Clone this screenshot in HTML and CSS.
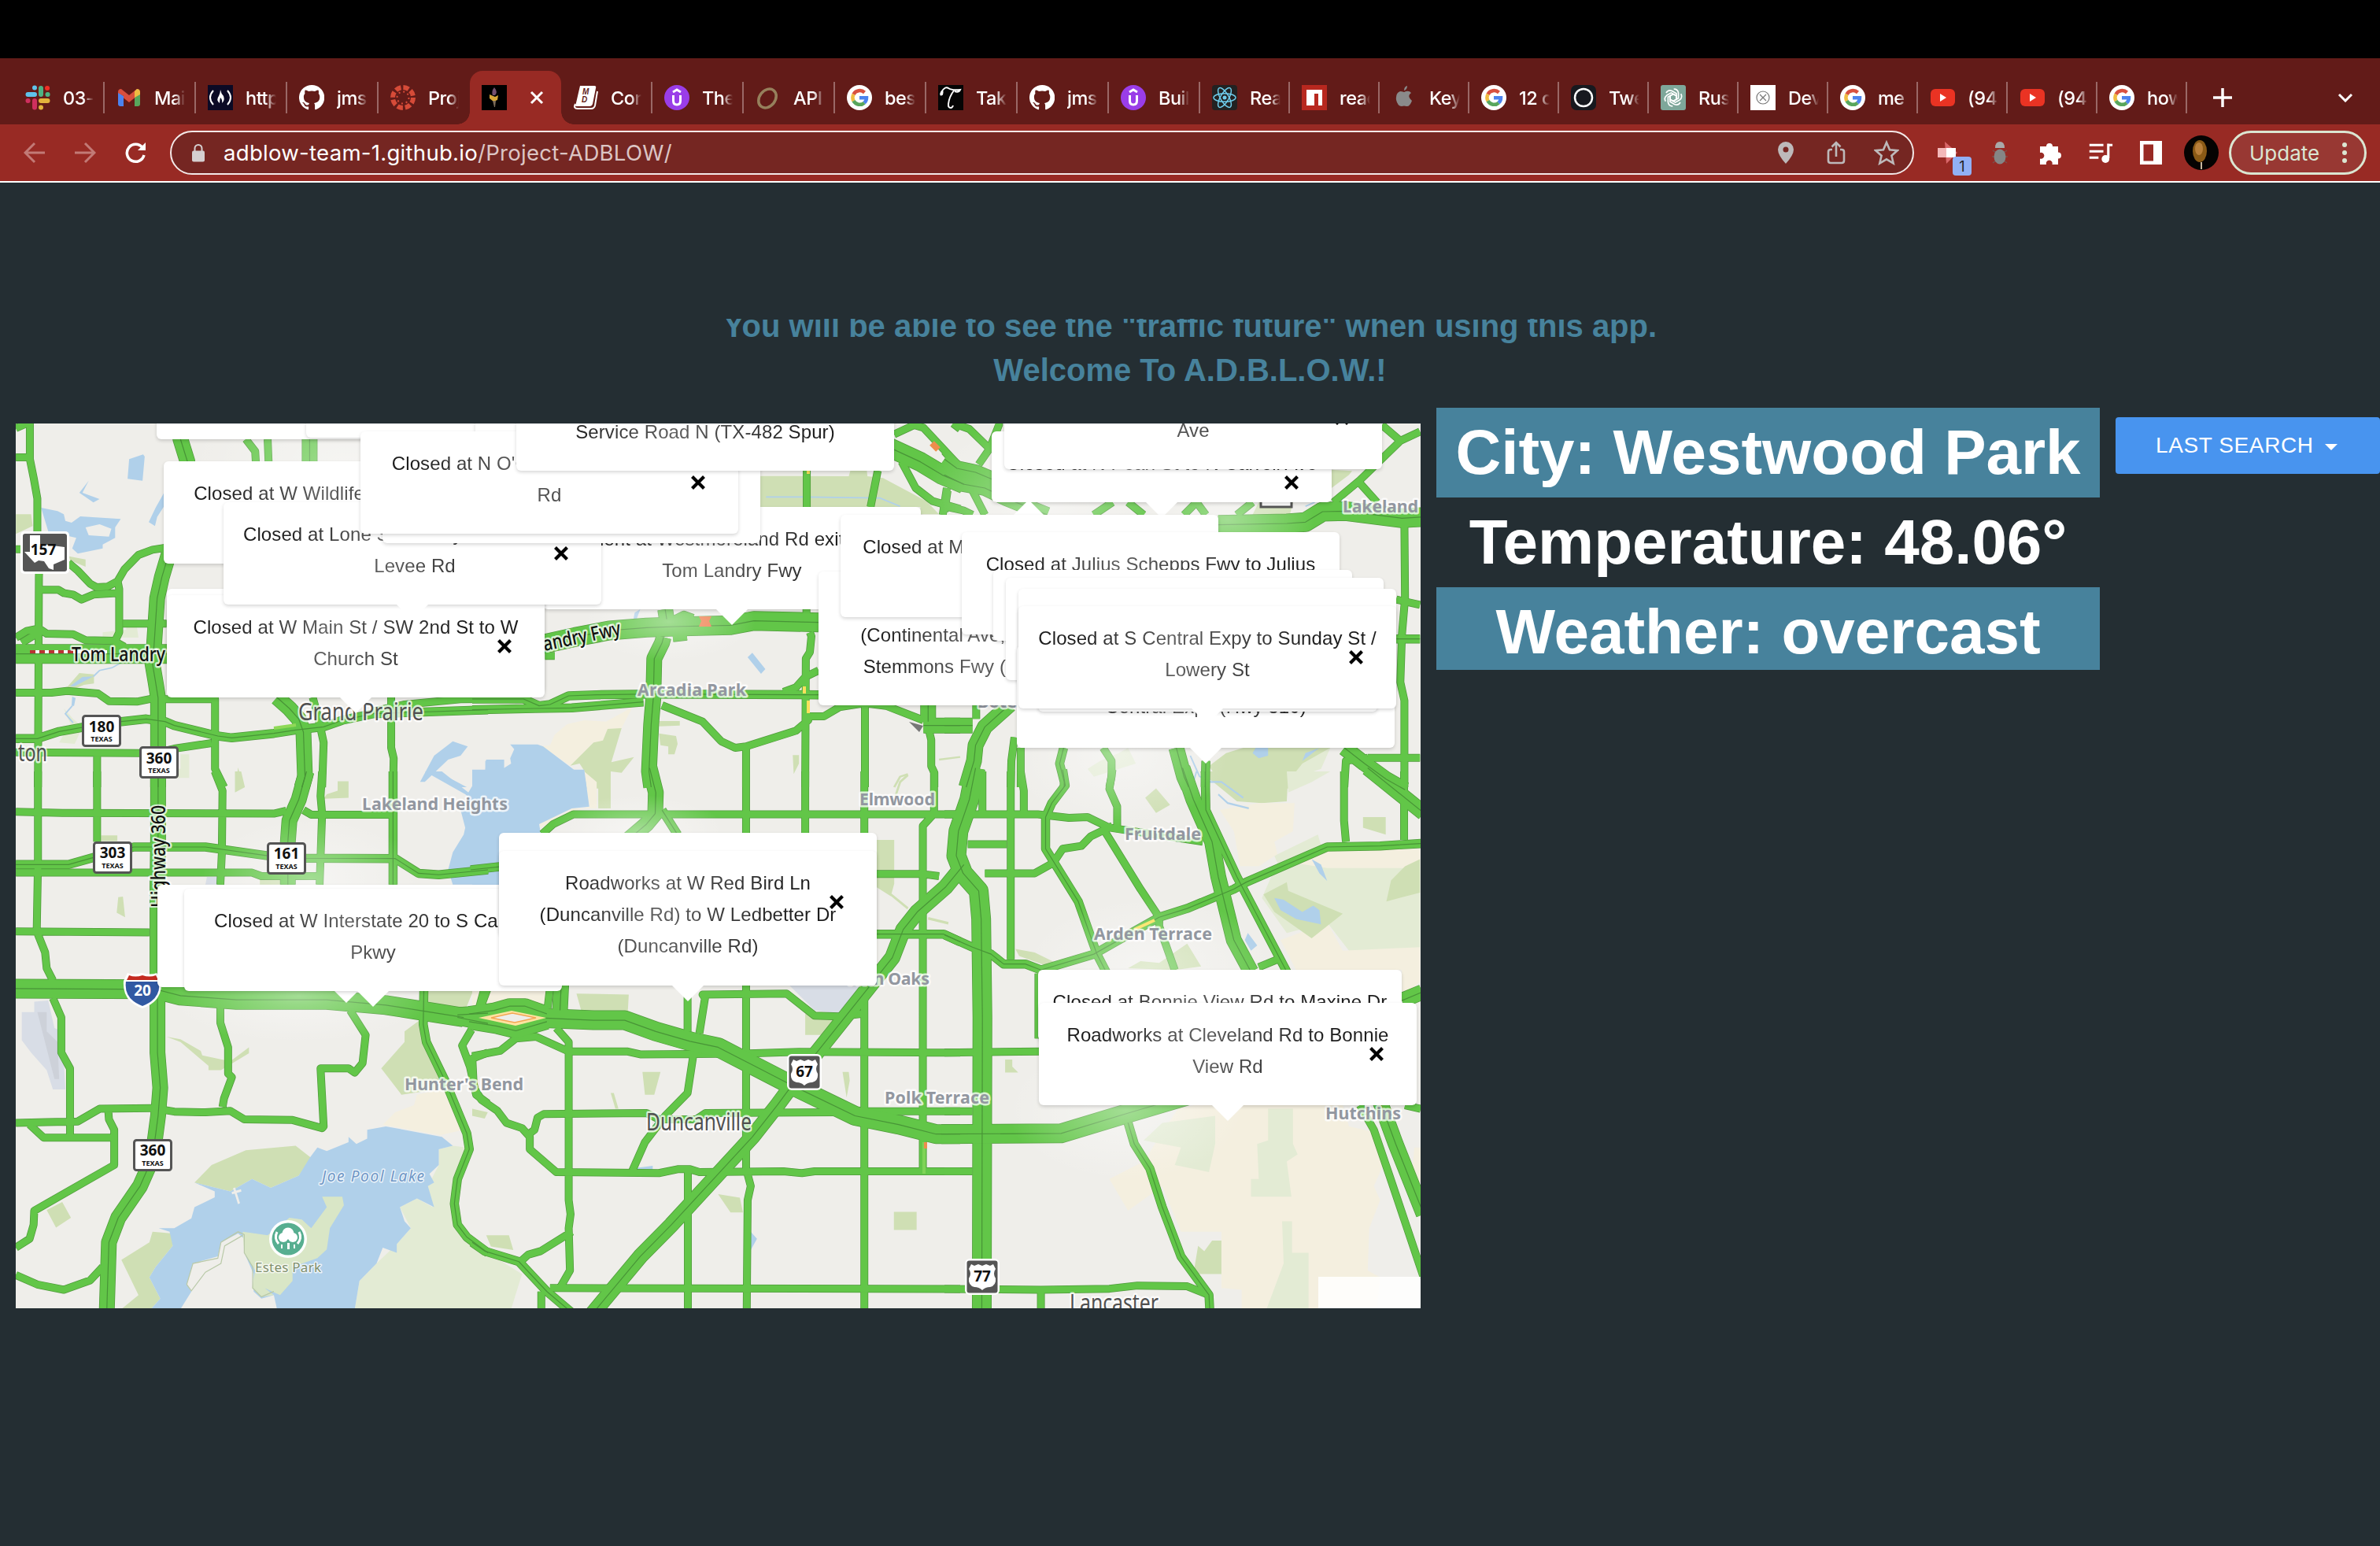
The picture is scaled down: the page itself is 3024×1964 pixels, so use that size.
FILE: index.html
```html
<!DOCTYPE html>
<html lang="en">
<head>
<meta charset="utf-8">
<title>A.D.B.L.O.W.</title>
<link rel="stylesheet" href="styles.css">
</head>
<body>
<svg class="defs" width="0" height="0" aria-hidden="true">
  <symbol id="i-slack" viewBox="0 0 32 32"><g stroke-width="6" stroke-linecap="round"><path d="M12 3.500v.1M3.500 12h8.500" stroke="#5fc3ea"/><path d="M20 4v8" stroke="#4eb283"/><path d="M28.500 12h.1" stroke="#4eb283"/><path d="M28 4h.1" stroke="#f02f25"/><path d="M20 28.500v.1M20 20h8.500" stroke="#e3b23c"/><path d="M12 20v8.500M3.500 20h.1" stroke="#cf2f5e"/></g></symbol>
  <symbol id="i-gmail" viewBox="0 0 32 32"><path d="M2 9v15q0 3 3 3h4V14z" fill="#4c83ee"/><path d="M30 9v15q0 3-3 3h-4V14z" fill="#58a65c"/><path d="M2 9q0-4 4-4l10 8 10-8v9l-10 8L9 16.500V27 14l-7-4z" fill="#d94f3d"/><path d="M23 8l3-3q4 0 4 4v3l-7 4z" fill="#f0bc42"/></symbol>
  <symbol id="i-fcc" viewBox="0 0 32 32"><path d="M0 0h32v32H0z" fill="#0b0a25"/><g fill="none" stroke="#fff" stroke-width="2"><path d="M7 7q-8 9 0 18M25 7q8 9 0 18"/></g><path d="M16 6q1 5 4 8 2 6-2 9 1-4-2-7-1 3-1 7-5-4-1-9 2-4 2-8z" fill="#fff"/></symbol>
  <symbol id="i-github" viewBox="0 0 32 32"><path d="M16 0a16 16 0 0 0-5 31.200c.8.1 1.100-.4 1.100-.8v-3c-4.500 1-5.400-2-5.400-2-.7-1.900-1.800-2.400-1.800-2.400-1.500-1 .1-1 .1-1 1.600.1 2.500 1.700 2.500 1.700 1.400 2.500 3.800 1.800 4.700 1.400.1-1 .6-1.800 1-2.200-3.600-.4-7.300-1.800-7.300-7.900 0-1.800.6-3.200 1.600-4.300-.1-.4-.7-2 .2-4.200 0 0 1.300-.4 4.400 1.600a15 15 0 0 1 8 0c3-2 4.400-1.600 4.400-1.600.9 2.200.3 3.800.2 4.200 1 1.100 1.600 2.500 1.600 4.300 0 6.100-3.700 7.500-7.300 7.900.6.500 1.100 1.500 1.100 3v4.500c0 .4.300.9 1.100.8A16 16 0 0 0 16 0z" fill="#fff"/></symbol>
  <symbol id="i-canvas" viewBox="0 0 32 32"><circle cx="16" cy="16" r="13" fill="none" stroke="#d64b38" stroke-width="6" stroke-dasharray="7.200 3.010"/><circle cx="16" cy="16" r="7.500" fill="none" stroke="#d64b38" stroke-width="2" stroke-dasharray="2 3.890"/></symbol>
  <symbol id="i-torch" viewBox="0 0 32 32"><path d="M0 0h32v32H0z" fill="#000"/><path d="M16 3q5 6 1 10h-3q-2-5 2-10z" fill="#76506f"/><path d="M10 12l7 3 4-2-1 6-5 2-5-4z" fill="#d8a637"/><path d="M14 20h4l-1 8h-1z" fill="#7c6b58"/></symbol>
  <symbol id="i-md" viewBox="0 0 32 32"><path d="M9 1h18q3 0 2 3l-4 20q-1 3-4 3H3z" fill="#fff"/><path d="M3 24q-3 6 3 6h17q4 0 5-4l3-18" fill="none" stroke="#fff" stroke-width="2"/><text x="12" y="12" class="md">M</text><text x="11" y="22" class="md">D</text></symbol>
  <symbol id="i-udemy" viewBox="0 0 32 32"><circle cx="16" cy="16" r="16" fill="#9a3de8"/><path d="M11 9l5-3 5 3M11.500 13v7q0 5 4.500 5t4.500-5v-7" fill="none" stroke="#fff" stroke-width="3"/></symbol>
  <symbol id="i-api" viewBox="0 0 32 32"><ellipse cx="15" cy="17" rx="10" ry="13" transform="rotate(38 15 17)" fill="none" stroke="#96805c" stroke-width="3.500"/></symbol>
  <symbol id="i-google" viewBox="0 0 32 32"><circle cx="16" cy="16" r="16" fill="#fff"/><g fill="none" stroke-width="4.500"><path d="M8.500 11.800A9 9 0 0 1 22.500 9.500" stroke="#d9513f"/><path d="M8.500 20.200a9 9 0 0 1 0-8.400" stroke="#f0bc42"/><path d="M8.500 20.200a9 9 0 0 0 13.700 2.500" stroke="#58a65c"/><path d="M16 16.200h9a9 9 0 0 1-2.900 6.500" stroke="#4c83ee"/></g></symbol>
  <symbol id="i-script" viewBox="0 0 32 32"><path d="M0 0h32v32H0z" fill="#050505"/><path d="M3 11q4-6 2 1-3 2-1-3Q9 1 13 4t15 2q-2 4-7 2M20 7q-6 8-7 17-.5 5 3 5 2 0 3-3" fill="none" stroke="#fff" stroke-width="2"/></symbol>
  <symbol id="i-react" viewBox="0 0 32 32"><rect width="32" height="32" rx="4" fill="#222"/><g fill="none" stroke="#6fcdec" stroke-width="1.500"><ellipse cx="16" cy="16" rx="14" ry="5.300"/><ellipse cx="16" cy="16" rx="14" ry="5.300" transform="rotate(60 16 16)"/><ellipse cx="16" cy="16" rx="14" ry="5.300" transform="rotate(120 16 16)"/></g><circle cx="16" cy="16" r="2.500" fill="#6fcdec"/></symbol>
  <symbol id="i-npm" viewBox="0 0 32 32"><path d="M0 0h32v32H0z" fill="#b8281f"/><path d="M6 6h20v20h-5V11h-5v15H6z" fill="#fff"/></symbol>
  <symbol id="i-apple" viewBox="0 0 32 32"><path d="M16 9q6-3 9 1-6 4 1 10-3 8-7 7-3-1-6 0Q8 27 6 19q-1-9 5-11 2 0 5 1zM16 7q0-5 4-6 0 5-4 6z" fill="#8a8a8a"/></symbol>
  <symbol id="i-ring" viewBox="0 0 32 32"><rect width="32" height="32" rx="7" fill="#17191f"/><circle cx="16" cy="16" r="11" fill="none" stroke="#fff" stroke-width="2.500"/></symbol>
  <symbol id="i-openai" viewBox="0 0 32 32"><rect width="32" height="32" rx="3" fill="#7ea79a"/><g fill="none" stroke="#fff" stroke-width="1.700"><path id="petal" d="M16 11.500l-4 2.300v7.500l5.500 3.200q5 2 7.500-2.500"/><use href="#petal" transform="rotate(60 16 16)"/><use href="#petal" transform="rotate(120 16 16)"/><use href="#petal" transform="rotate(180 16 16)"/><use href="#petal" transform="rotate(240 16 16)"/><use href="#petal" transform="rotate(300 16 16)"/></g></symbol>
  <symbol id="i-dev" viewBox="0 0 32 32"><path d="M0 0h32v32H0z" fill="#fff"/><g fill="none" stroke="#777" stroke-width="1.200"><circle cx="16" cy="16" r="8"/><path d="M12 12l8 8M20 12l-8 8"/></g></symbol>
  <symbol id="i-youtube" viewBox="0 0 32 32"><rect x="1" y="5" width="31" height="22" rx="6" fill="#ea3323"/><path d="M13 11l8 5-8 5z" fill="#fff"/></symbol>
  <symbol id="i-x" viewBox="0 0 18 18"><path d="M3 3l12 12M15 3L3 15" stroke="currentColor" stroke-width="4.200" stroke-linecap="square"/></symbol>
  <symbol id="us" viewBox="0 0 46 48"><rect x="1" y="1" width="44" height="46" rx="6" fill="#fff"/><rect x="3.500" y="3.500" width="39" height="41" rx="3" fill="#555"/><path d="M9 8l4 2 5-2 5 2 5-2 5 2 4-2 3 6q-4 6 0 12 1 9-7 11-6 0-10 4-4-4-10-4-8-2-7-11 4-6 0-12z" fill="#fff"/></symbol>
</svg>

<header class="browser">
  <div class="notch"></div>
  <nav class="tabs">
    <div class="tab"><svg><use href="#i-slack"/></svg><span>03-w</span></div>
    <div class="tab"><svg><use href="#i-gmail"/></svg><span>Mail</span></div>
    <div class="tab"><svg><use href="#i-fcc"/></svg><span>https</span></div>
    <div class="tab"><svg><use href="#i-github"/></svg><span>jmsa</span></div>
    <div class="tab bare"><svg><use href="#i-canvas"/></svg><span>Proj</span></div>
    <div class="tab active"><svg><use href="#i-torch"/></svg><svg class="close" viewBox="0 0 20 20"><path d="M3 3l14 14M17 3L3 17"/></svg></div>
    <div class="tab"><svg><use href="#i-md"/></svg><span>Con</span></div>
    <div class="tab"><svg><use href="#i-udemy"/></svg><span>The</span></div>
    <div class="tab"><svg><use href="#i-api"/></svg><span>API</span></div>
    <div class="tab"><svg><use href="#i-google"/></svg><span>best</span></div>
    <div class="tab"><svg><use href="#i-script"/></svg><span>Take</span></div>
    <div class="tab"><svg><use href="#i-github"/></svg><span>jmsa</span></div>
    <div class="tab"><svg><use href="#i-udemy"/></svg><span>Buil</span></div>
    <div class="tab narrow"><svg><use href="#i-react"/></svg><span>Rea</span></div>
    <div class="tab narrow"><svg><use href="#i-npm"/></svg><span>reac</span></div>
    <div class="tab narrow"><svg><use href="#i-apple"/></svg><span>Key</span></div>
    <div class="tab narrow"><svg><use href="#i-google"/></svg><span>12 c</span></div>
    <div class="tab narrow"><svg><use href="#i-ring"/></svg><span>Twe</span></div>
    <div class="tab narrow"><svg><use href="#i-openai"/></svg><span>Rus</span></div>
    <div class="tab narrow"><svg><use href="#i-dev"/></svg><span>Dev</span></div>
    <div class="tab narrow"><svg><use href="#i-google"/></svg><span>me</span></div>
    <div class="tab narrow"><svg><use href="#i-youtube"/></svg><span>(94)</span></div>
    <div class="tab narrow"><svg><use href="#i-youtube"/></svg><span>(94)</span></div>
    <div class="tab narrow"><svg><use href="#i-google"/></svg><span>how</span></div>
    <svg class="plus" viewBox="0 0 24 24"><path d="M12 0v24M0 12h24"/></svg>
    <svg class="chev" viewBox="0 0 20 12"><path d="M2 2l8 8 8-8"/></svg>
  </nav>
  <div class="toolbar">
    <svg class="nav dim" viewBox="0 0 28 28"><path d="M27 14H3M14 2L2 14l12 12"/></svg>
    <svg class="nav dim" viewBox="0 0 28 28"><path d="M1 14h24M14 2l12 12-12 12"/></svg>
    <svg class="nav reload" viewBox="0 0 28 28"><path d="M23 7.500A11 11 0 1 0 25 17"/><path d="M27 1v10H17z" fill="#fff" stroke="none"/></svg>
    <div class="omnibox">
      <svg class="lock" viewBox="0 0 18 24"><rect x="1" y="9" width="16" height="14" rx="2" fill="#d5cfd0"/><path d="M4.500 10V6a4.500 4.500 0 0 1 9 0v4" fill="none" stroke="#d5cfd0" stroke-width="2"/></svg>
      <p class="url">adblow-team-1.github.io<span>/Project-ADBLOW/</span></p>
      <div class="omni-icons">
        <svg viewBox="0 0 32 32"><path d="M16 2a10 10 0 0 0-10 10q0 7 10 18 10-11 10-18A10 10 0 0 0 16 2zm0 6.500a3.500 3.500 0 1 1 0 7 3.500 3.500 0 0 1 0-7z" fill="#bdb9ba"/></svg>
        <svg viewBox="0 0 32 32"><path d="M11 12H9q-3 0-3 3v11q0 3 3 3h14q3 0 3-3V15q0-3-3-3h-2M16 21V3M10.500 8.500L16 3l5.500 5.500" class="line"/></svg>
        <svg viewBox="0 0 32 32"><path d="M16 3l4 9.200 10 .9-7.600 6.600 2.300 9.800L16 24.300l-8.700 5.200 2.300-9.800L2 13.100l10-.9z" class="line"/></svg>
      </div>
    </div>
    <div class="exts">
      <div class="ext"><svg viewBox="0 0 32 32"><path d="M10 2l16 14-14 14z" fill="#d9676a"/><path d="M1 10h14v12H1z" fill="#f3b8b9"/><path d="M12 10h12v12H12z" fill="#fff"/></svg><b class="badge">1</b></div>
      <svg viewBox="0 0 32 32"><g stroke="#7d4f4a" stroke-width="1.500"><path d="M7 13l4 3M25 13l-4 3M6 21h4M26 21h-4M7 29l4-3M25 29l-4-3"/></g><ellipse cx="16" cy="21" rx="7.500" ry="9.500" fill="#858585"/><path d="M10 10q0-8 6-8t6 8z" fill="#a9a9a9"/></svg>
      <svg viewBox="0 0 32 32"><path d="M3 8h8a4 4 0 1 1 8 0h7v7.500a4 4 0 1 1 0 8V31h-7.500a4 4 0 1 0-7.500 0H3v-7.500a4 4 0 1 0 0-7.500z" fill="#fff"/></svg>
      <svg viewBox="0 0 36 32"><path d="M2 5h20M2 14h20M2 23h13" stroke="#fff" stroke-width="3.500"/><path d="M29 3v21M28 5h7" stroke="#fff" stroke-width="3.500"/><circle cx="25" cy="25" r="5.500" fill="#fff"/></svg>
      <svg viewBox="0 0 32 32"><path d="M2 1h28v30H2zM6.500 5.500v21H19v-21z" fill="#fff" fill-rule="evenodd"/></svg>
    </div>
    <svg class="avatar" viewBox="0 0 44 44"><circle cx="22" cy="22" r="22" fill="#050302"/><ellipse cx="20" cy="20" rx="9" ry="14" fill="#8a5a16"/><ellipse cx="19" cy="17" rx="5" ry="8" fill="#b87f3a"/><path d="M22 34v9" stroke="#c9b9a0" stroke-width="2"/></svg>
    <button class="update"><span>Update</span><svg viewBox="0 0 8 28"><circle cx="4" cy="4" r="3"/><circle cx="4" cy="14" r="3"/><circle cx="4" cy="24" r="3"/></svg></button>
  </div>
</header>

<section class="intro">
  <div class="intro-lines">
    <h3>You will be able to see the "traffic future" when using this app.</h3>
    <h3>Welcome To A.D.B.L.O.W.!</h3>
  </div>
</section>

<main class="content">
  <div class="map">
    <svg class="canvas" viewBox="20 538 1785 1124">
      <defs>
        <radialGradient id="glow"><stop offset="0" stop-color="#fff" stop-opacity=".42"/><stop offset="1" stop-color="#fff" stop-opacity="0"/></radialGradient>
        <g id="roads">
          <g transform="translate(0 520) scale(.39541 .33333)">
            <path class="st" d="M96 54V190L108 260 120 340V470L127 560 125 640 124 900 122 1440M51 183H96M51 533H70M220 585L250 615 290 665 310 678 345 676 378 655 400 610 445 555 490 535 530 528M378 655L383 685V850L365 895M125 688H188L205 700 235 706 262 725 300 706 383 700M395 817H535M51 870L85 845 125 835 150 855 235 857 275 880 365 882 400 905M70 890L125 850M51 1080H165L215 1073 315 1083 350 1112 440 1114 500 1100M530 1105H691V1370L720 1440M51 1307L450 1310 500 1310 560 1293 680 1272M312 1310V1440M1005 1098L1015 1140 1030 1215 1040 1270 1035 1440M1257 1098V1290L1265 1330 1263 1440M790 114L820 160 822 200M860 114L863 200M51 72L85 54M1200 1150L1300 1125 1480 1105 1568 1104"/>
            <path class="dv" d="M51 1255H120L190 1228 265 1212 390 1190 470 1180 530 1190 560 1205 700 1245 745 1252 880 1235 950 1222 1040 1210 1100 1185 1200 1160 1568 1145"/>
            <path class="hw" d="M575 54L580 114 602 198 590 400 545 540 520 640 505 720 495 900 490 970 500 1040 508 1100V1440M995 100V210M890 1098L930 1140 960 1180 975 1230 980 1400 970 1440"/>
            <path class="fw" d="M51 932H540"/>
          </g>
          <g transform="translate(600 520) scale(.39541 .33333)">
            <path class="st" d="M234 940H265M650 800L680 782 710 795M645 872L690 866M610 1128L740 1190 800 1265 845 1290 880 1285 1040 1225 1080 1185V1170H1130L1180 1135 1260 1120 1330 1130 1450 1185M1074 762V800M1085 850L1090 865 1085 925 1072 950 1070 1440M1000 1077L1040 1060 1070 1020 1113 995M880 1285V1440M1262 1128V1440M1465 1210L1475 1260V1360L1485 1385V1440M1075 234V372M1303 234L1280 372M1356 95L1420 60 1450 70 1568 220M1380 200L1425 300 1480 350 1568 380M1525 300L1512 402M1545 54L1568 75"/>
            <path class="dv" d="M0 1104H165L215 1130 250 1125 310 1092 400 1088 580 1085 1113 1088M0 1145L200 1140 320 1138 550 1115"/>
            <path class="hw" d="M620 762L625 800M615 868L610 890 585 950 582 1100 575 1200 568 1380 575 1440M1465 1128V1190M1450 1205H1568"/>
            <path class="fw" d="M200 900L235 893 330 868 440 843 560 832 650 828 830 823 905 806 1113 812M1340 145L1440 200 1510 250 1580 285"/>
          </g>
          <g transform="translate(1200 520) scale(.39541 .33333)">
            <path class="st" d="M30 54L80 75 145 150 110 210M165 54L175 60 145 150M0 160L45 220M10 310L0 390M0 370L60 385 90 402M90 310L130 402M480 402L540 354M590 354L640 402M770 402L810 354 840 402M940 402L990 354M1406 60L1465 120 1528 85M1465 120L1335 270 1250 354M1330 275L1390 354M1478 435L1480 720 1470 860 1465 1040 1478 1110V1440M1452 725L1528 745M1360 1328H1528M1360 1328L1290 1340 1285 1440M102 1128V1180M225 1250L215 1340 213 1440M245 1290V1440M510 1290L537 1340V1400L530 1440"/>
            <path class="dv" d="M1452 875H1528M383 1290L370 1350 385 1420V1440M840 1340L838 1440"/>
            <path class="hw" d="M0 190L40 225 100 240 160 270M0 250L60 285 130 300 200 340 330 402M0 1205H90M210 1125L130 1210 100 1280 95 1340 70 1440M745 1290L770 1400 785 1440M1285 1290L1350 1350 1420 1410 1480 1450"/>
            <path class="fw" d="M880 440L1100 435 1160 430 1215 390 1290 388 1470 415 1540 410"/>
          </g>
          <g transform="translate(0 980) scale(.39541 .44643)">
            <path class="st" d="M122 0V260L118 455 145 515 150 560 170 595M170 645L197 700V800L225 845V1040M312 0V200M51 115L200 118 880 120 920 112M51 288H810L840 298H1030M690 0L715 55 713 230 708 322M1035 0L1030 70 1035 120 1027 322M975 110L1000 123H1263M51 455L480 458M708 660V715L733 785V860L745 870 720 930 715 955M51 1000L150 998 250 996 320 960 490 958 560 968 660 970 740 966 785 990 940 992 1035 1015 1040 1010 1030 845H1120L1140 857 1165 830 1175 750 1125 680M95 1005L140 1042H365M348 965L350 990 367 1020V1120L110 1250 108 1290 95 1330 51 1355M51 1433L120 1460 205 1475 290 1448 330 1410M1568 615L1545 670M1515 735L1485 780 1510 840 1530 920 1568 945M1510 820L1568 800"/>
            <path class="dv" d="M51 265H220L300 245 430 215H660L860 240 980 247 1270 248 1345 290 1410 294 1568 280M1263 0V322M1362 622L1360 720 1370 770 1430 880 1500 1030 1508 1075 1470 1160 1460 1230 1470 1290 1500 1325 1568 1370"/>
            <path class="hw" d="M985 0L960 80 930 140 925 200V322M508 -10V190L506 330V800L515 900 508 980 490 1100 450 1180 380 1270 350 1340 343 1540"/>
            <path class="fw" d="M40 618L500 620 580 638 760 650 1050 650 1240 665 1420 690 1490 700"/>
            <path class="hw" d="M1470 693L1520 690 1568 688M1470 700L1568 717"/>
          </g>
          <g transform="translate(600 980) scale(.39541 .44643)">
            <path class="st" d="M225 178L260 150 325 122H1568M880 0V175M880 600V1130L895 1180 885 1220 882 1540M1070 0V175M1260 0V175M1260 620V1540M1484 0V120L1448 155V1140M1300 292H1448L1500 298M40 615L20 680M250 615L242 675M270 730L310 770V1220L316 1260 310 1300 314 1420 285 1465M0 810L90 795 140 760 205 755 310 797H500L540 805 870 803 1050 798 1568 800M0 810L5 900 30 935 80 965 110 1000 160 1015 185 1040V1075L270 1140 600 1143 660 1132H700L730 1140 1000 1138 1060 1143 1100 1138H1568M185 1030L200 1020 210 985 230 975 560 972 600 990H720L750 972 1180 970M1260 967H1568M692 640V740M730 745L748 645 740 635 1010 632 1100 695 1180 697 1250 690M710 810L692 915 620 980 555 1055 515 1135M693 1140V1540M320 1310L220 1365 180 1375 155 1395M222 1480V1540M250 1470L1568 1473"/>
            <path class="dv" d="M610 110L660 180M1300 463H1515L1568 485M0 1340L40 1365 150 1395 240 1480 320 1540M-5 280L100 270"/>
            <path class="hw" d="M570 -10L590 60 588 120 560 150 500 195M286 605L282 680M-10 690L70 680 120 668 170 668 240 690M-10 712L80 725 140 738 240 712M1580 265L1520 330 1430 400 1385 450 1350 530 1170 730 1080 830 980 950 900 1040 640 1290 540 1380 380 1550"/>
            <path class="fw" d="M235 702L390 708 490 708 590 740 700 768 790 785 900 835 1020 890 1230 980 1370 1005 1490 1032H1568"/>
          </g>
          <g transform="translate(1200 980) scale(.39541 .44643)">
            <path class="st" d="M0 122H300L400 132 460 130 530 160 830 200M75 207H200M213 0V535M245 0L255 55V115M122 0V120M130 290H290L350 260 380 220 440 212 470 185 540 155M540 -5L530 50 555 100V155M515 170L630 335 690 415V440L740 565M1010 557L1070 535M1284 0V140L1290 200M1477 0V195M0 800L305 797M302 575V760M0 967H90M0 1138H90M0 1473L310 1475 530 1472 620 1463 780 1465 850 1490M310 1480V1540M1335 950L1380 1020 1430 1150 1540 1440M1480 950L1530 960"/>
            <path class="dv" d="M380 -5L388 40 345 90 325 130V220L430 370 490 520 525 580M0 465L90 500 150 520 190 548H260L310 565 480 520 600 460 690 415 780 390 930 335 970 315 1230 215 1400 212 1535 205M838 0L840 110 940 300 1100 570M590 1000L610 1060 660 1130 700 1240 760 1380 850 1490 853 1540"/>
            <path class="hw" d="M765 -10L800 80 860 200 880 300 930 480 985 570M1360 -10L1540 118M1470 652L1535 628M1400 940L1450 1060 1540 1260"/>
            <path class="fw" d="M100 -10L80 80 45 170 38 240 60 290 110 340 118 420 122 700 120 1540M-10 1032L375 1030 580 975 790 920"/>
          </g>
        </g>
      </defs>
      <rect x="20" y="538" width="1785" height="1124" fill="#efeeea"/>

      <g transform="translate(0 520) scale(.39541 .33333)">
        <path class="park" d="M51 400H100L105 445 51 475ZM222 560L275 572V600L225 575ZM215 1060L255 1005 302 1010V1045L270 1050 220 1075ZM765 1365L773 1400 772 1440H757Z"/>
        <path class="park pale" d="M205 1140L235 1180 240 1195H225ZM190 1270L235 1180 265 1210 240 1275ZM580 1315H608V1405H550L545 1370H580ZM410 800L440 830 445 870H330V850L405 840Z"/>
        <path class="water" fill-rule="evenodd" d="M415 190L460 172 465 180 458 272 410 265ZM285 272L265 318 320 342 300 355 255 318ZM132 375L185 388 205 400 210 425 230 432 258 408 388 418 370 450V490L330 515V530L250 550 232 530 245 490 155 465ZM275 450L320 438 358 455 350 485 285 480ZM527 318L500 375 478 430 498 445 505 410 527 370ZM225 1055L265 1020 300 1018 240 1055ZM232 1095L243 1100 238 1130 230 1130ZM1455 1265L1503 1285 1480 1320 1440 1335 1365 1420H1350L1395 1320ZM1395 1380L1405 1380 1500 1440H1480ZM1562 1335H1620V1440H1556Z"/>
        <path class="stream" d="M300 1018L320 995 360 985 390 965M232 1130L210 1160 235 1195"/>
      </g>
      <g transform="translate(600 520) scale(.39541 .33333)">
        <path class="park" d="M926 254L1210 255 1215 234H1268L1270 255 1320 262 1460 350 1500 400H1440V372H926ZM600 1188H667V1205L600 1208ZM600 1235L655 1245 660 1275 650 1315H630V1285L605 1280ZM1030 1318H1050V1350L1033 1390Z"/>
        <path class="sand" d="M265 1240L305 1200 360 1185 430 1190 515 1135 480 1215 420 1265 390 1270 315 1358 225 1285 250 1280Z"/>
        <path class="park" d="M420 1262L435 1218 480 1215 447 1345 520 1325 480 1385 445 1380 440 1445H400L375 1405 345 1350 315 1358 390 1270Z"/>
        <path class="water" d="M900 928L942 990 928 1008 885 945ZM122 1277H210L228 1285 365 1408 370 1445H30L42 1405V1340L60 1335 98 1370 125 1350 122 1330 135 1295ZM0 1430L10 1425V1445H0ZM540 762L528 800H518L522 775Z"/>
        <path class="stream" d="M944 334H1070L1310 338 1375 370"/>
        <path class="park line" d="M1356 1440L1375 1400 1400 1390M1500 1335L1568 1325"/>
      </g>
      <g transform="translate(1200 520) scale(.39541 .33333)">
        <path class="park" d="M905 1310L960 1290H1240L1215 1340 1105 1445H900L850 1360ZM1240 230L1310 235 1300 250 1244 300ZM1010 354H1120L1110 402H990Z"/>
        <path class="park pale" d="M1150 1350L1240 1290 1210 1370 1110 1410ZM460 1370L500 1340 560 1310 590 1290 615 1350 480 1400Z"/>
        <path class="water" d="M1000 1290H1040V1320L1010 1330 990 1310ZM1160 1310L1205 1290 1150 1340Z"/>
        <path class="stream" d="M790 1320L820 1400 880 1420 900 1440M1160 370L1190 354"/>
      </g>
      <g transform="translate(0 980) scale(.39541 .44643)">
        <path class="sand" d="M1340 920L1440 900 1490 1020 1415 1035 1230 1005 1270 970 1330 950ZM785 1480L890 1485V1530H785ZM1540 625L1620 610V680H1530Z"/>
        <path class="park" d="M1085 28H1120V75L1040 78 1050 65 1085 55ZM755 0H775L787 45 755 60ZM325 182H377V198H325ZM380 358L395 356 402 415 375 402ZM150 1248L200 1225 228 1270 180 1298ZM625 1170L680 1120 790 1078 950 1065 1000 1100 960 1150 870 1185 810 1160 740 1195ZM390 1390L480 1340 490 1310 555 1315V1350L500 1410 480 1440 515 1500 485 1530H390L445 1490ZM1375 625H1520L1490 690 1370 680ZM1345 710L1300 740V770L1225 845 1290 920 1440 900 1400 800 1365 760ZM535 755L580 762 645 795 650 808 740 825 800 785V802L710 850H670V838L580 770ZM835 308H900V322H835Z"/>
        <path class="park pale" d="M1140 1530L1155 1450 1210 1400 1275 1345 1320 1300 1285 1240 1340 1215 1390 1240 1375 1180 1410 1120V1075L1455 1065 1500 1070 1470 1160 1450 1250 1470 1310 1620 1400V1530Z"/>
        <path class="air" d="M110 655L155 652 175 730 200 740 210 905H170L150 850 100 800 70 765V685H110ZM665 300H708V322H660Z"/>
        <path d="M120 685H150V740L185 770 190 875H175Z" fill="#cdd1d9"/>
        <path class="water" d="M510 1300H560L615 1272 625 1240 690 1212V1195L625 1170 740 1195 810 1160 870 1185 960 1150 995 1100 1020 1070 1050 1080 1120 1055V1040L1145 1060 1180 1045V1020L1240 1010 1420 1040 1455 1065 1410 1075V1120L1380 1145 1395 1170 1375 1180 1395 1240 1340 1215 1285 1240 1300 1280 1320 1300 1275 1345V1370L1230 1355 1210 1400 1155 1450 1140 1530H485L515 1500 480 1440 500 1410 555 1350 545 1310ZM1495 160L1480 110 1560 0H1620V322H1455L1440 280 1455 230 1490 180ZM1365 0H1420L1505 60 1525 30 1530 90 1495 65Z"/>
        <path d="M600 1460L620 1400 700 1380 710 1340 765 1315 785 1330 790 1380 815 1430V1480L840 1500 880 1490 890 1530H580L615 1480Z" fill="#efeeea"/>
        <path d="M780 1310L860 1320 930 1270 970 1275 1000 1300 1050 1240 1035 1210 1100 1210 1105 1235 1060 1300 1050 1360 1020 1385 940 1410V1450L900 1490 850 1470 880 1490 840 1495 810 1470 820 1420 785 1370Z" fill="#d9e6c6"/>
        <path d="M600 1460L620 1400 700 1385 710 1340 765 1310 785 1318V1370L812 1410V1470L840 1495 880 1480M600 1460L615 1478 660 1425 710 1400 722 1350 780 1320" fill="none" stroke="#b9c9a8" stroke-width="3"/>
        <path d="M752 1185L768 1230M745 1200L775 1192" stroke="#efeeea" stroke-width="7"/>
      </g>
      <g transform="translate(600 980) scale(.39541 .44643)">
        <path class="sand" d="M360 0L400 30V105H320L220 160 215 140 376 100ZM0 620H240V690H0Z"/>
        <path class="park" d="M360 0H445V105H405V30ZM547 855H605L585 920H555ZM1355 1253H1428V1305H1355ZM790 1203L860 1213 870 1255H830ZM45 1320H118L132 1362 60 1352ZM335 632L503 635 500 683 350 680ZM1300 195H1356V320L1345 355 1300 330ZM1070 690H1170V750H1070ZM1190 855H1210L1213 880 1203 928ZM445 915H455L470 960H460ZM0 960L50 970 40 988 0 980Z"/>
        <path class="park pale" d="M-5 1340L160 1430 125 1530H-5Z"/>
        <path class="water" d="M30 -5H360L376 100 320 105 215 150 220 175H86V322H0V-5ZM895 1310L915 1330 895 1362ZM530 1128L580 1122V1135H530Z"/>
        <path class="air" d="M1015 605H1290L1190 690 1100 680Z"/>
        <path class="park line" d="M1360 70L1375 30 1400 10M1345 350L1400 390M1465 418L1530 432"/>
      </g>
      <g transform="translate(1200 980) scale(.39541 .44643)">
        <path class="park" d="M820 0H1105L1100 85 1020 90 940 85 850 20ZM1345 130H1418V180L1345 160ZM645 75L680 48 725 95 680 118ZM590 560L630 540 690 545 780 490 825 555 740 565ZM228 505L290 515 370 550 350 560 240 525ZM195 820H218V840L237 857H195Z"/>
        <path class="park pale" d="M1100 0L1240 0 1180 30 1105 60ZM1060 240L1200 180 1230 270 1528 275V510H1300L1230 430 1100 460 1020 360 1070 260Z"/>
        <path class="sand" d="M885 110L1010 90H1125L1120 170 1060 200 1070 235 1010 270 950 270 930 170ZM1120 260L1240 225 1528 220V275H1230ZM1080 480L1230 430 1280 510 1528 500V600L1470 640V565H1130ZM800 950H1280L1300 1010 1400 1030 1420 1100 1380 1180 1400 1220 1365 1300 1360 1420 1400 1440 1390 1530H955V1475L890 1470V1310H760L700 1180 590 1250 530 1160 640 1110 750 960ZM1510 1070H1530V1170H1500Z"/>
        <path class="park" d="M1025 350L1100 315 1105 340 1280 405 1180 475 1060 400ZM1435 310L1480 270 1528 250V345L1420 370ZM815 1350L835 1365 860 1335H890V1430H800Z"/>
        <path class="park pale" d="M1040 960H1120V1060L1135 1090 1100 1110 1115 1210H985V1160H1010L1005 1060 1040 1050ZM640 1050L700 1000 870 980V1060L850 1140 740 1120 760 1070ZM1085 1280H1117V1370H1170V1530H1035L1090 1400Z"/>
        <path class="water" d="M1060 360L1090 365 1150 400 1185 382 1205 395 1210 435 1130 420 1080 395ZM1180 250L1210 265 1230 312 1205 290ZM975 460L1005 495 985 510 965 480Z"/>
        <path class="stream" d="M850 30H890L960 75M880 65L910 90 978 105M810 0L800 30"/>
      </g>

      <use href="#roads" class="casing"/>
      <use href="#roads" class="surface"/>
      <use href="#roads" class="median"/>

      <path d="M888 783h16l-3 6 3 7h-16l3-7z" fill="#ee7d4c"/>
      <path d="M1155 917l18 5-5 8z" fill="#777"/>
      <path d="M1025 600h4M1022 872v9M1027 890v16M1441 1181l26-12" stroke="#fbe05c" stroke-width="4"/>
      <path d="M1184 563l8 8" stroke="#ee8d4c" stroke-width="8"/>
      <path d="M1174 1451v40" stroke="#7fd356" stroke-width="4"/><path d="M1176 1451v8" stroke="#ee8d4c" stroke-width="4"/>
      <path d="M348 925l28-4" stroke="#8fd957" stroke-width="4"/>
      <path d="M608 1293l42-9 44 9-39 10z" fill="#ffe3a0"/><path d="M624 1293l27-6 30 6-27 6z" fill="#efeeea" stroke="#f3a653" stroke-width="1.500"/>
      <path d="M38 828h98" stroke="#fff" stroke-width="4"/><path d="M38 828h60" stroke="#b33" stroke-width="4" stroke-dasharray="7 5"/>

      <g fill="url(#glow)">
        <ellipse cx="395" cy="1118" rx="140" ry="80"/><ellipse cx="380" cy="1265" rx="170" ry="60"/><ellipse cx="440" cy="600" rx="200" ry="140"/>
        <ellipse cx="1330" cy="640" rx="160" ry="110"/><ellipse cx="1560" cy="660" rx="110" ry="60"/><ellipse cx="810" cy="1055" rx="110" ry="45"/>
        <ellipse cx="1460" cy="1230" rx="160" ry="90"/><ellipse cx="1430" cy="1410" rx="150" ry="90"/><ellipse cx="1420" cy="960" rx="140" ry="90"/><ellipse cx="850" cy="790" rx="110" ry="50"/>
      </g>

      <g class="labels hood">
        <text x="460" y="1029" textLength="185">Lakeland Heights</text>
        <text x="1092" y="1023" textLength="96">Elmwood</text>
        <text x="1429" y="1067" textLength="97">Fruitdale</text>
        <text x="1390" y="1194" textLength="150">Arden Terrace</text>
        <text x="514" y="1385" textLength="151">Hunter's Bend</text>
        <text x="1124" y="1402" textLength="133">Polk Terrace</text>
        <text x="1684" y="1422" textLength="96">Hutchins</text>
        <text x="810" y="884" textLength="138">Arcadia Park</text>
        <text x="1706" y="651" textLength="96">Lakeland</text>
        <text x="1074" y="1251" textLength="107">Twin Oaks</text>
        <text x="1242" y="899" textLength="50">Bote</text>
      </g>
      <g class="labels town">
        <text x="821" y="1436" textLength="134" lengthAdjust="spacingAndGlyphs">Duncanville</text>
        <text x="379" y="915" textLength="159" lengthAdjust="spacingAndGlyphs">Grand Prairie</text>
        <text x="1359" y="1666" textLength="113" lengthAdjust="spacingAndGlyphs">Lancaster</text>
        <text x="23" y="967" textLength="37" lengthAdjust="spacingAndGlyphs">ton</text>
      </g>
      <g class="labels route">
        <text x="91" y="840" textLength="119" lengthAdjust="spacingAndGlyphs">Tom Landry</text>
        <text transform="translate(692 827) rotate(-12)" textLength="100" lengthAdjust="spacingAndGlyphs">andry Fwy</text>
        <text transform="translate(210 1153) rotate(-90)" textLength="130" lengthAdjust="spacingAndGlyphs">Highway 360</text>
      </g>
      <text class="lake" x="409" y="1501" textLength="130">Joe Pool Lake</text>
      <text class="parkname" x="324" y="1616" textLength="84">Estes Park</text>
      <circle cx="366" cy="1574" r="24" fill="#fff"/><circle cx="366" cy="1574" r="20.500" fill="#57ae90"/>
      <g fill="#fff"><circle cx="366" cy="1567" r="7.500"/><circle cx="360" cy="1572" r="6"/><circle cx="372" cy="1572" r="6"/><path d="M365 1579h3v8h-3zM357 1581h2v5h-2zM373 1581h2v5h-2z"/></g><path d="M352 1565q-4 8 2 15M380 1565q4 8-2 15" stroke="#fff" stroke-width="3" fill="none"/>

      <g class="shield"><rect x="105.500" y="909.500" width="47" height="38" rx="3"/><text x="129" y="930">180</text><text x="129" y="942" class="tx">TEXAS</text></g>
      <g class="shield"><rect x="178.500" y="949.500" width="47" height="38" rx="3"/><text x="202" y="970">360</text><text x="202" y="982" class="tx">TEXAS</text></g>
      <g class="shield"><rect x="119.500" y="1070.500" width="47" height="38" rx="3"/><text x="143" y="1090">303</text><text x="143" y="1103" class="tx">TEXAS</text></g>
      <g class="shield"><rect x="340.500" y="1071.500" width="47" height="38" rx="3"/><text x="364" y="1091">161</text><text x="364" y="1104" class="tx">TEXAS</text></g>
      <g class="shield"><rect x="170.500" y="1448.500" width="47" height="38" rx="3"/><text x="194" y="1468">360</text><text x="194" y="1481" class="tx">TEXAS</text></g>
      <g class="shield"><path d="M1602 630v14h39v-14" fill="#fff" stroke="#555" stroke-width="3"/></g>
      <rect x="26" y="675" width="62" height="54" rx="5" fill="#fff"/><rect x="29" y="678" width="56" height="48" rx="3" fill="#555"/>
      <path d="M38 680h13v11l31 4v16l-14 6v7l-6-2-6-9-7-1-5 3-13-14h7z" fill="#fff"/>
      <g class="shield"><text x="55" y="705">157</text></g>
      <use href="#us" x="999" y="1338" width="46" height="48"/><g class="shield"><text x="1022" y="1368">67</text></g>
      <use href="#us" x="1225" y="1598" width="46" height="48"/><g class="shield"><text x="1248" y="1628">77</text></g>
      <path d="M162 1236q7 3 18 0 12 3 19 0l6 10q2 26-24 35-26-9-24-35z" fill="#fff"/><path d="M160 1247h42q3 22-21 31-24-9-21-31z" fill="#3159a2"/><path d="M164 1239q8 3 17 0 9 3 17 0l3 6h-40z" fill="#c42a20"/>
      <g class="shield"><text x="181" y="1265" class="inv">20</text></g>
    </svg>

    <div class="pop p1"></div>
    <div class="pop p2"></div>
    <div class="pop p3"></div>
    <div class="pop wildlife"><p>Closed at W Wildlife Pkwy to Stadium</p></div>
    <div class="pop tip westmore"><p>Accident at Westmoreland Rd exit toward<br>Tom Landry Fwy</p></div>
    <div class="pop main-back"></div>
    <div class="pop tip main"><p>Closed at W Main St / SW 2nd St to W<br>Church St</p><svg><use href="#i-x"/></svg></div>
    <div class="pop tip lone"><p>Closed at Lone Star Pkwy to N Mountain<br>Levee Rd</p><svg><use href="#i-x"/></svg></div>
    <div class="pop p4"></div>
    <div class="pop oconnor"><p>Closed at N O'Connor Rd to N Britain<br>Rd</p><svg><use href="#i-x"/></svg></div>
    <div class="pop service"><p>Service Road N (TX-482 Spur)</p></div>

    <div class="pop tip pearl"><p>Closed at N Pearl St to N Carroll Ave</p><svg><use href="#i-x"/></svg></div>
    <div class="pop ave"><p><br>Ave</p><svg><use href="#i-x"/></svg></div>
    <div class="uptip"></div>
    <div class="pop continental"><p><br>(Continental Ave, Stemmons Fwy)<br>Stemmons Fwy (Continental Ave)</p></div>
    <div class="pop mck"><p>Closed at McKinney Ave to N Field St /</p></div>
    <div class="pop julius"><p>Closed at Julius Schepps Fwy to Julius</p></div>
    <div class="pop s1"></div>
    <div class="pop s2"></div>
    <div class="pop s3"></div>
    <div class="pop tip expy-back"><p>Central Expy (Hwy 310)</p></div>
    <div class="pop s4"></div>
    <div class="pop tip expy"><p>Closed at S Central Expy to Sunday St /<br>Lowery St</p><svg><use href="#i-x"/></svg></div>

    <div class="pop tip i20-back"></div>
    <div class="pop tip i20"><p>Closed at W Interstate 20 to S Carrier<br>Pkwy</p></div>
    <div class="pop red-back"></div>
    <div class="pop tip red"><p>Roadworks at W Red Bird Ln<br>(Duncanville Rd) to W Ledbetter Dr<br>(Duncanville Rd)</p><svg><use href="#i-x"/></svg></div>
    <div class="pop bonnie"><p>Closed at Bonnie View Rd to Maxine Dr</p></div>
    <div class="pop tip cleveland"><p>Roadworks at Cleveland Rd to Bonnie<br>View Rd</p><svg><use href="#i-x"/></svg></div>
    <div class="attribution"></div>
  </div>

  <section class="weather">
    <h2 class="lit">City: Westwood Park</h2>
    <h2>Temperature: 48.06°</h2>
    <h2 class="lit last">Weather: overcast</h2>
  </section>

  <button class="last-search"><span>LAST SEARCH</span><i class="caret"></i></button>
</main>
</body>
</html>
```

FILE: styles.css
```css
* { box-sizing: border-box; }
body { margin: 0; width: 3024px; height: 1964px; overflow: hidden; background: #242e33; font-family: "Liberation Sans", Arial, sans-serif; }
h2, h3, p { margin: 0; }
button { border: 0; padding: 0; font: inherit; color: inherit; }
.defs { position: absolute; }
.md { font: italic bold 10px "Liberation Sans", sans-serif; fill: #621b18; }

/* browser chrome */
.browser { height: 232px; border-bottom: 2px solid #fff; background: #982a24; font-family: Inter, "Liberation Sans", sans-serif; color: #fff; }
.notch { height: 74px; background: #000; }
.tabs { height: 84px; background: #621b18; padding: 16px 34px 0 17px; display: flex; align-items: flex-start; }
.tab { flex: none; width: 116px; height: 68px; padding: 0 14px 0 15px; display: flex; align-items: center; gap: 16px; background: linear-gradient(#9a6866, #9a6866) right 0 top 14px / 2px 40px no-repeat; }
.tab svg { width: 32px; height: 32px; flex: none; }
.tab span { flex: 1; overflow: hidden; white-space: nowrap; font-size: 23.5px; font-weight: 450; letter-spacing: -.5px; -webkit-mask-image: linear-gradient(90deg, #000 65%, transparent); mask-image: linear-gradient(90deg, #000 65%, transparent); }
.tab.narrow { width: 114px; padding-right: 12px; }
.tab.bare, .tab.active { background-image: none; }
.tab.active { background: #982a24; border-radius: 16px 16px 0 0; position: relative; gap: 28px; }
.tab.active::before, .tab.active::after { content: ""; position: absolute; bottom: 0; width: 16px; height: 16px; }
.tab.active::before { left: -16px; background: radial-gradient(circle at 0 0, transparent 15.5px, #982a24 16px); }
.tab.active::after { right: -16px; background: radial-gradient(circle at 100% 0, transparent 15.5px, #982a24 16px); }
.tab .close { width: 20px; height: 20px; fill: none; stroke: #fff; stroke-width: 3; }
.plus { width: 24px; height: 24px; margin: 22px 0 0 33px; stroke: #fff; stroke-width: 3.5; }
.chev { width: 20px; height: 12px; margin: 28px 0 0 auto; fill: none; stroke: #fff; stroke-width: 3; }

.toolbar { height: 72px; padding: 0 17px 0 30px; display: flex; align-items: center; }
.nav { width: 28px; height: 28px; flex: none; margin-right: 36px; fill: none; stroke: #fff; stroke-width: 3; }
.nav.dim { stroke: #c27a76; }
.nav.reload { margin-right: 30px; stroke-width: 3.5; }
.omnibox { width: 2216px; height: 56px; flex: none; border: 2px solid #f3e9e8; border-radius: 28px; background: #752622; display: flex; align-items: center; padding: 0 17px 0 25px; }
.lock { width: 18px; height: 25px; margin-right: 23px; }
.url { font-size: 27.6px; letter-spacing: .25px; white-space: nowrap; }
.url span { color: #dcc5c4; }
.omni-icons { margin-left: auto; display: flex; gap: 32px; }
.omni-icons svg { width: 32px; height: 32px; }
.line { fill: none; stroke: #bdb9ba; stroke-width: 2.6; }
.exts { display: flex; gap: 32px; margin-left: 29px; align-items: center; }
.exts > svg, .ext svg { width: 32px; height: 32px; display: block; }
.ext { position: relative; }
.badge { position: absolute; left: 20px; top: 21px; width: 24px; height: 24px; border-radius: 4px; background: #91b0f5; color: #222; font: 18px/25px Inter, sans-serif; text-align: center; }
.avatar { width: 44px; height: 44px; margin-left: 26px; flex: none; }
.update { width: 175px; height: 56px; margin-left: auto; border: 3px solid #dbe6d2; border-radius: 28px; background: #983833; color: #dbe6d2; display: flex; align-items: center; justify-content: space-between; padding: 0 21px 0 23px; font-size: 26px; }
.update svg { width: 8px; height: 28px; fill: #dbe6d2; }

.intro { height: 286px; padding-top: 173px; text-align: center; color: #47829c; }
.intro-lines { height: 93px; overflow: hidden; display: flex; flex-direction: column; justify-content: flex-end; }
.intro-lines h3 { flex: none; font-size: 40px; line-height: 56px; font-weight: bold; }

/* content row */
.content { display: flex; align-items: flex-start; padding-left: 20px; }
.map { position: relative; flex: none; width: 1785px; height: 1124px; margin-top: 20px; overflow: hidden; }
.canvas { display: block; width: 1785px; height: 1124px; }
.weather { flex: none; width: 843px; margin-left: 20px; text-align: center; color: #fff; }
.weather h2 { height: 114px; font-size: 80px; line-height: 114px; white-space: nowrap; }
.weather .lit { background: #47829c; }
.weather .last { height: 105px; }
.last-search { flex: none; width: 336px; height: 72px; margin: 12px 0 0 20px; border-radius: 4px; background: #4894ef; color: #fff; display: flex; align-items: center; padding-left: 51px; font-size: 28px; letter-spacing: .6px; gap: 14px; }
.caret { border: 8px solid transparent; border-top-color: #fff; border-bottom: 0; margin-top: 4px; }

/* map painting */
.water { fill: #b0d0ea; }
.park { fill: #cfdfb4; }
.park.pale { fill: #e3ebd4; }
.park.line { fill: none; stroke: #cfdfb4; stroke-width: 7; }
.sand { fill: #f4efdf; }
.air { fill: #d8dde6; }
.stream { fill: none; stroke: #b0d0ea; stroke-width: 5; }
.casing { stroke: #4f9a3b; --k: 1; --extra: 1.5px; --plain: 1; }
.surface { stroke: #62c648; --k: 1; --extra: 0px; --plain: 1; }
.median { stroke: #489437; --k: 0; --extra: 1.2px; --plain: 0; }
.st, .dv, .hw, .fw { fill: none; vector-effect: non-scaling-stroke; stroke-linejoin: round; stroke-width: calc(var(--w) * var(--k) + var(--extra)); }
.st { --w: 8.5px; stroke-opacity: var(--plain); }
.dv { --w: 10px; }
.hw { --w: 18.5px; }
.fw { --w: 23.5px; }
.labels text, .lake, .parkname { paint-order: stroke; stroke: rgba(255, 255, 255, .75); stroke-width: 5px; stroke-linejoin: round; font-family: "Noto Sans", sans-serif; }
.hood text { font-size: 21.5px; font-weight: 700; fill: #9297a0; }
.town text { font-size: 30px; fill: #505050; }
.route text { font-size: 25px; font-weight: 500; fill: #111; }
.lake { font-size: 19px; font-style: italic; fill: #6f96c6; stroke-width: 3px; }
.parkname { font-size: 17px; fill: #7f8f6c; stroke-width: 3px; }
.shield rect { fill: #fff; stroke: #555; stroke-width: 3; }
.shield text { font: bold 19px "Noto Sans", sans-serif; text-anchor: middle; fill: #111; }
.shield .tx { font-size: 9px; }
.shield .inv { fill: #fff; }

/* incident popups */
.pop { position: absolute; width: 480px; height: 130px; padding-top: 21px; background: #fff; border-radius: 6px; box-shadow: 0 2px 4px rgba(0, 0, 0, .16); text-align: center; font-size: 24px; line-height: 40px; letter-spacing: .1px; white-space: nowrap; }
.pop p { color: transparent; background: linear-gradient(90deg, #1d1d1d 14%, #606060 42%, #484848 54%, #1d1d1d 78%); -webkit-background-clip: text; background-clip: text; }
.pop svg { position: absolute; right: 42px; top: 56px; width: 18px; height: 18px; color: #000; }
.tip::after { content: ""; position: absolute; left: calc(50% - 20px); top: 100%; border: 20px solid transparent; border-top-color: #fff; border-bottom: 0; }
.p1 { left: 179px; top: -110px; }
.p2 { left: 369px; top: -112px; }
.p3 { left: 584px; top: -106px; }
.wildlife { left: 188px; top: 48px; }
.westmore { left: 670px; top: 106px; }
.main-back { left: 192px; top: 210px; }
.main { left: 192px; top: 218px; }
.lone { left: 264px; top: 100px; }
.lone p { padding-left: 6px; }
.p4 { left: 466px; top: 22px; }
.oconnor { left: 438px; top: 10px; }
.service { left: 636px; top: -30px; height: 90px; }
.pearl { left: 1240px; top: 10px; width: 432px; height: 90px; }
.ave { left: 1256px; top: -72px; }
.uptip { position: absolute; left: 1267px; top: 97px; border: 20px solid transparent; border-bottom-color: #fff; border-top: 0; }
.continental { left: 1020px; top: 188px; height: 170px; }
.continental p { padding-right: 8px; }
.mck { left: 1048px; top: 116px; }
.mck p { padding-right: 8px; }
.julius { left: 1202px; top: 138px; }
.s1 { left: 1242px; top: 186px; width: 456px; height: 90px; }
.s2 { left: 1258px; top: 196px; }
.s3 { left: 1274px; top: 210px; }
.expy-back { left: 1272px; top: 282px; padding-top: 58px; }
.s4 { left: 1299px; top: 320px; width: 431px; height: 46px; }
.expy { left: 1274px; top: 232px; }
.i20-back { left: 180px; top: 586px; }
.i20 { left: 214px; top: 591px; }
.red-back { left: 614px; top: 520px; }
.red { left: 614px; top: 543px; height: 171px; }
.bonnie { left: 1299px; top: 694px; width: 462px; height: 90px; }
.cleveland { left: 1300px; top: 736px; }
.attribution { position: absolute; right: 0; bottom: 0; width: 130px; height: 40px; background: rgba(255, 255, 255, .85); }
```
